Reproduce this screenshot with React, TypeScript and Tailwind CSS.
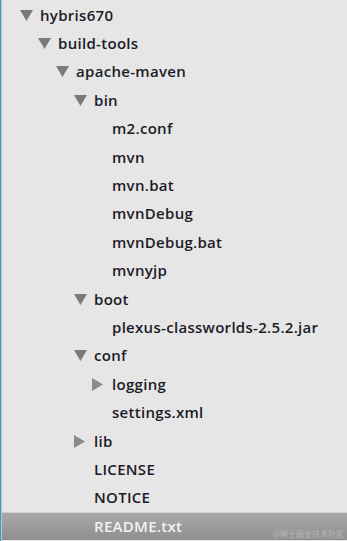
import React from "react"

type Node = { name: string; level: number; arrow?: "down" | "right"; selected?: boolean }

const rows: Node[] = [
  { name: "hybris670", level: 0, arrow: "down" },
  { name: "build-tools", level: 1, arrow: "down" },
  { name: "apache-maven", level: 2, arrow: "down" },
  { name: "bin", level: 3, arrow: "down" },
  { name: "m2.conf", level: 4 },
  { name: "mvn", level: 4 },
  { name: "mvn.bat", level: 4 },
  { name: "mvnDebug", level: 4 },
  { name: "mvnDebug.bat", level: 4 },
  { name: "mvnyjp", level: 4 },
  { name: "boot", level: 3, arrow: "down" },
  { name: "plexus-classworlds-2.5.2.jar", level: 4 },
  { name: "conf", level: 3, arrow: "down" },
  { name: "logging", level: 4, arrow: "right" },
  { name: "settings.xml", level: 4 },
  { name: "lib", level: 3, arrow: "right" },
  { name: "LICENSE", level: 3 },
  { name: "NOTICE", level: 3 },
  { name: "README.txt", level: 3, selected: true },
]

function Arrow({ dir }: { dir: "down" | "right" }) {
  if (dir === "down")
    return (
      <svg width="13" height="11" viewBox="0 0 13 11" className="shrink-0">
        <path d="M0 0 H13 L6.5 11 Z" fill="#7a7a7a" />
      </svg>
    )
  return (
    <svg width="11" height="13" viewBox="0 0 11 13" className="shrink-0">
      <path d="M0 0 V13 L11 6.5 Z" fill="#8a8a8a" />
    </svg>
  )
}

export default function App() {
  return (
    <div className="relative h-[541px] w-[347px] overflow-hidden border-l border-[#2fa6b6] bg-[#e6e6e6] font-['Open_Sans',sans-serif]">
      <div className="h-full border-l border-[#c4c4c4] pt-px">
        {rows.map((r) => (
          <div
            key={r.name}
            className={
              "relative flex h-[28.4px] items-center " +
              (r.selected
                ? "border-t border-[#cfcfcf] bg-gradient-to-b from-[#a9a9a9] to-[#8f8f8f] text-[#f2f2f2]"
                : "text-[#1c1c28]")
            }
          >
            <div style={{ width: 18 + r.level * 18 }} className="shrink-0" />
            <div className="flex w-[20px] shrink-0 items-center">{r.arrow && <Arrow dir={r.arrow} />}</div>
            <span className="text-[15px] font-semibold leading-none tracking-[0.3px]">{r.name}</span>
          </div>
        ))}
      </div>
      <div className="absolute bottom-[3px] right-[3px] text-[8px] leading-none text-[#b9b9b9] font-['Noto_Sans_CJK_SC',sans-serif]">
        @稀土掘金技术社区
      </div>
    </div>
  )
}
